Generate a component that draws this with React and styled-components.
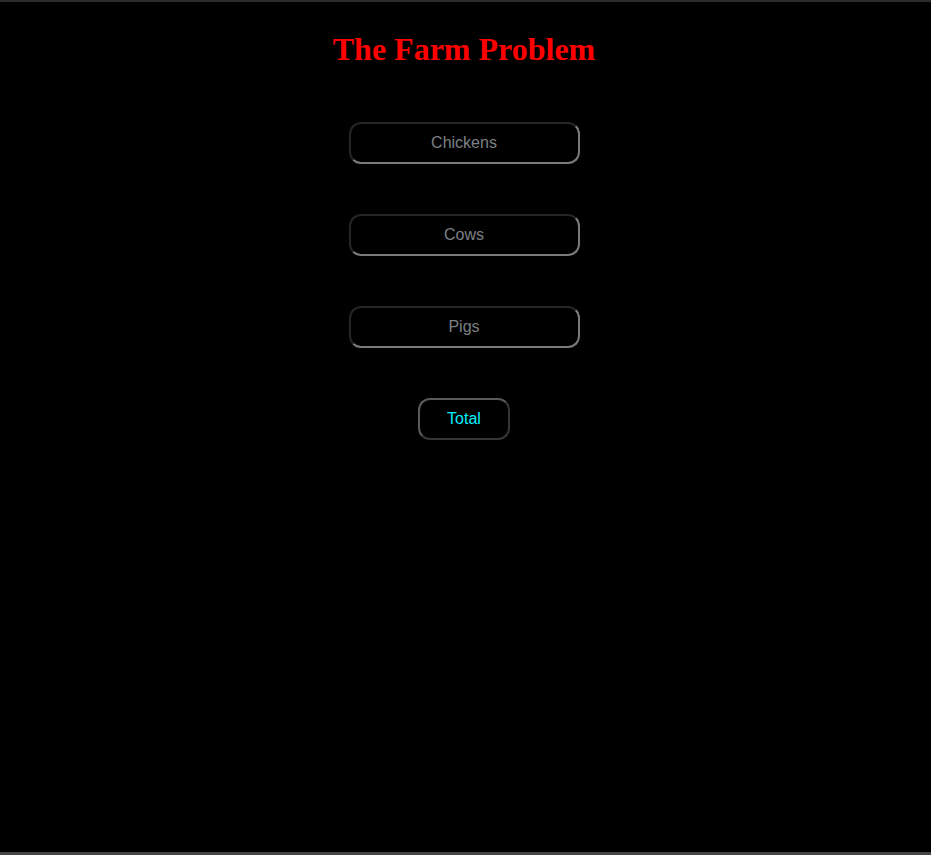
import React from "react";
import styled, { createGlobalStyle } from "styled-components";

const Global = createGlobalStyle`
  html, body { margin: 0; padding: 0; background: #000; }
  * { box-sizing: border-box; }
`;

const Page = styled.div`
  min-height: 100vh;
  background: #000;
  border-top: 2px solid #2b2b2b;
  border-bottom: 3px solid #444;
  display: flex;
  flex-direction: column;
  align-items: center;
  padding-top: 29px;
  padding-right: 3px;
`;

const Title = styled.h1`
  margin: 0 0 54px;
  font-family: "Liberation Serif", "Times New Roman", serif;
  font-size: 32px;
  font-weight: bold;
  color: #ff0000;
  line-height: 37px;
`;

const Form = styled.div`
  display: flex;
  flex-direction: column;
  align-items: center;
  gap: 50px;
`;

const Field = styled.input`
  width: 231px;
  height: 42px;
  border: 2px inset #7a7a7a;
  border-radius: 12px;
  background: #000;
  color: #ccc;
  text-align: center;
  font-family: "Liberation Sans", Arial, sans-serif;
  font-size: 16px;
  outline: none;
  &::placeholder { color: #7c8085; }
`;

const Button = styled.button`
  width: 92px;
  height: 42px;
  border: 2px solid;
  border-color: #5a5a5a #353535 #353535 #5a5a5a;
  border-radius: 12px;
  background: #000;
  color: #00f0ff;
  font-family: "Liberation Sans", Arial, sans-serif;
  font-size: 16px;
  cursor: pointer;
`;

export default function App() {
  return (
    <>
      <Global />
      <Page>
        <Title>The Farm Problem</Title>
        <Form>
          <Field placeholder="Chickens" />
          <Field placeholder="Cows" />
          <Field placeholder="Pigs" />
          <Button>Total</Button>
        </Form>
      </Page>
    </>
  );
}
